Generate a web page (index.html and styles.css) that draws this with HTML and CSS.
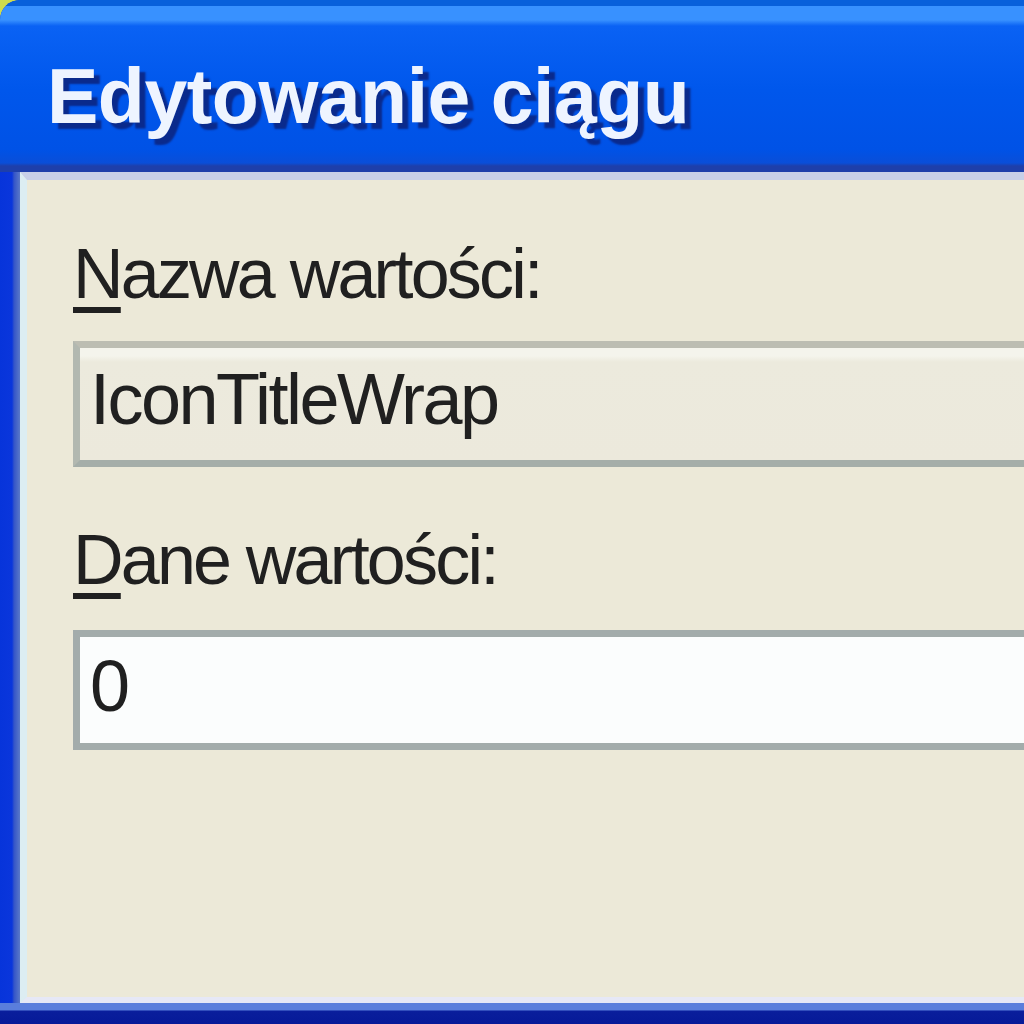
FILE: index.html
```html
<!DOCTYPE html>
<html lang="pl">
<head>
<meta charset="utf-8">
<title>Edytowanie ciągu</title>
<link rel="stylesheet" href="styles.css">
</head>
<body>
<div class="window">
  <div class="titlebar">
    <span class="title">Edytowanie ciągu</span>
  </div>
  <div class="frame">
    <div class="frame-left"></div>
    <div class="client">
      <label class="label label-first"><u>N</u>azwa wartości:</label>
      <div class="edit edit-readonly">IconTitleWrap</div>
      <label class="label label-second"><u>D</u>ane wartości:</label>
      <div class="edit edit-value">0</div>
    </div>
  </div>
  <div class="frame-bottom"></div>
</div>
</body>
</html>
```

FILE: styles.css
```css
html, body {
  margin: 0;
  padding: 0;
  width: 1024px;
  height: 1024px;
  overflow: hidden;
  background: #cfdc4e;
}

.window {
  width: 1024px;
  height: 1024px;
  display: flex;
  flex-direction: column;
  border-top-left-radius: 20px;
  overflow: hidden;
  background: #0734da;
}

/* Luna title bar */
.titlebar {
  height: 172px;
  flex: none;
  box-sizing: border-box;
  padding: 58px 0 0 47px;
  overflow: hidden;
  background: linear-gradient(to bottom,
    #0860db 0, #0860db 6px,
    #3891ff 6px, #3891ff 20px,
    #0a62f4 26px, #0057ec 90px,
    #0052e6 150px, #0a4ed8 163px,
    #1e3faa 166px, #1e3faa 172px);
}

.title {
  display: block;
  font-family: "Liberation Sans", Arial, sans-serif;
  font-weight: bold;
  font-size: 77px;
  line-height: 77px;
  color: #eef4ff;
  letter-spacing: -0.5px;
  text-shadow: 6px 6px 2px #0a2a8c;
  white-space: nowrap;
}

.frame {
  flex: 1;
  display: flex;
  min-height: 0;
}

.frame-left {
  width: 20px;
  flex: none;
  background: linear-gradient(to right, #0734da 0, #0a36dc 12px, #3454c8 14px, #5a78c8 20px);
}

.client {
  flex: 1;
  min-width: 0;
  overflow: hidden;
  box-sizing: border-box;
  background: #ece9d8;
  border-top: 8px solid #c8d0e8;
  border-left: 7px solid #dcedf2;
  border-bottom: 6px solid #e6e8f6;
  padding: 58px 0 0 46px;
  display: flex;
  flex-direction: column;
  font-family: "Liberation Sans", Tahoma, sans-serif;
  font-size: 72px;
  line-height: 72px;
  color: #202020;
}

.label {
  display: block;
  font-size: 70px;
  letter-spacing: -2.8px;
  white-space: nowrap;
}

.label u {
  text-decoration-thickness: 6px;
  text-underline-offset: 9px;
}

.label-first {
  margin-bottom: 31px;
}

.label-second {
  margin-top: 57px;
  margin-bottom: 34px;
}

.edit {
  box-sizing: border-box;
  margin-right: -40px;
  border: 7px solid #a6aeab;
  padding-left: 10px;
  letter-spacing: -2.5px;
  white-space: nowrap;
}

.edit-readonly {
  height: 126px;
  padding-top: 15px;
  background: linear-gradient(to bottom, #f4f4ec 0, #f4f4ec 8px, #eceadd 14px, #ece9dc 100%);
  border-color: #bcbdb2 #b2b8b0 #a5aea9 #b2b8b0;
}

.edit-value {
  height: 120px;
  padding-top: 13px;
  background: #fbfdfd;
  border-color: #a3acab;
}

.frame-bottom {
  height: 21px;
  flex: none;
  background: linear-gradient(to bottom, #5a7edc 0, #5a7edc 7px, #0a1e9c 8px, #061a98 100%);
}
```
